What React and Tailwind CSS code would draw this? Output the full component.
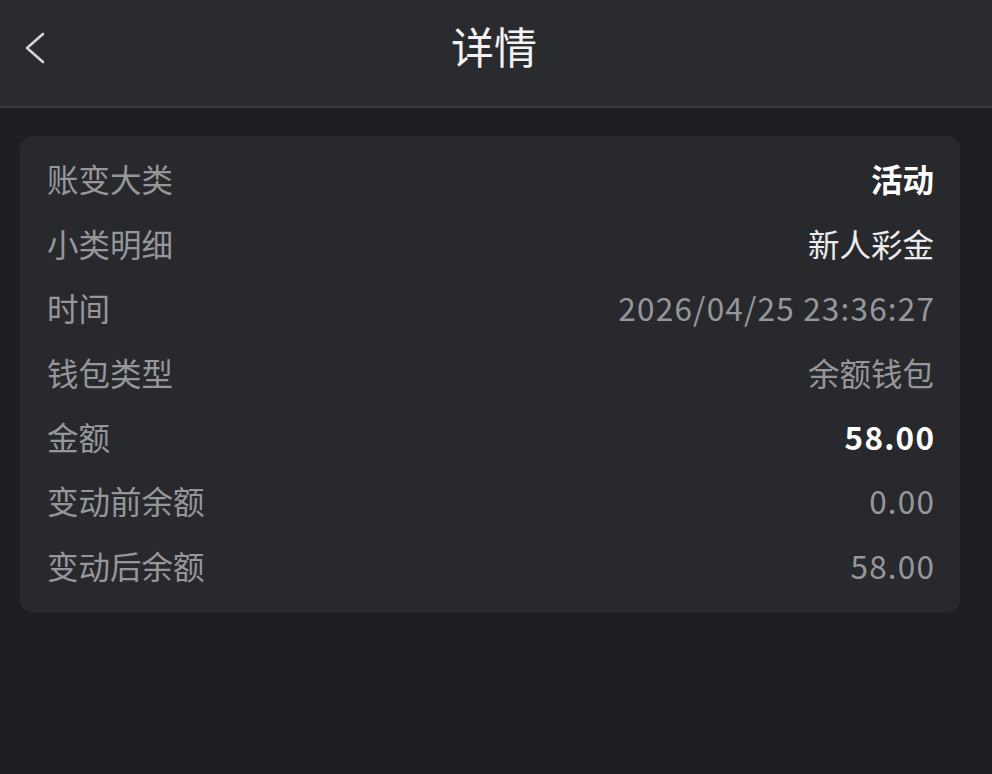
const rows = [
  { label: '账变大类', value: '活动', tone: 'strong' },
  { label: '小类明细', value: '新人彩金', tone: 'light' },
  { label: '时间', value: '2026/04/25 23:36:27', tone: 'muted', num: true },
  { label: '钱包类型', value: '余额钱包', tone: 'muted' },
  { label: '金额', value: '58.00', tone: 'strong', num: true },
  { label: '变动前余额', value: '0.00', tone: 'muted', num: true },
  { label: '变动后余额', value: '58.00', tone: 'muted', num: true },
]

const toneClass = {
  strong: 'text-white font-bold',
  light: 'text-[#ececee] font-normal',
  muted: 'text-[#96979b]',
}

export default function App() {
  return (
    <div
      className="min-h-screen w-full bg-[#1e1f23] flex flex-col"
      style={{ fontFamily: "'Noto Sans CJK SC', 'Noto Sans', sans-serif" }}
    >
      {/* Header */}
      <div className="h-[108px] bg-[#2a2b2f] flex items-center relative border-b-[2px] border-[#3b3c40]">
        <button className="absolute left-[22px] top-[30px] p-0 text-[#d4d4d6]">
          <svg width="26" height="36" viewBox="0 0 26 36" fill="none" stroke="currentColor" strokeWidth="2.6" strokeLinecap="round" strokeLinejoin="round">
            <polyline points="21,4 5,18 21,32" />
          </svg>
        </button>
        <h1 className="w-full text-center text-[43px] leading-none text-[#f2f2f3] font-normal -mt-[16px] pr-[4px]">详情</h1>
      </div>

      {/* Card */}
      <div className="px-[20px] pt-[28px] pr-[32px]">
        <div className="bg-[#28292d] rounded-[14px] pl-[27px] pr-[26px] pt-[11px] pb-[15px]">
          {rows.map((r) => (
            <div key={r.label} className="h-[64.4px] flex items-center justify-between text-[31.5px] leading-none">
              <span className="text-[#96979b]">{r.label}</span>
              <span className={`${toneClass[r.tone]} ${r.num ? 'tracking-[1.2px] -mr-[1.2px]' : ''}`}>{r.value}</span>
            </div>
          ))}
        </div>
      </div>
    </div>
  )
}
